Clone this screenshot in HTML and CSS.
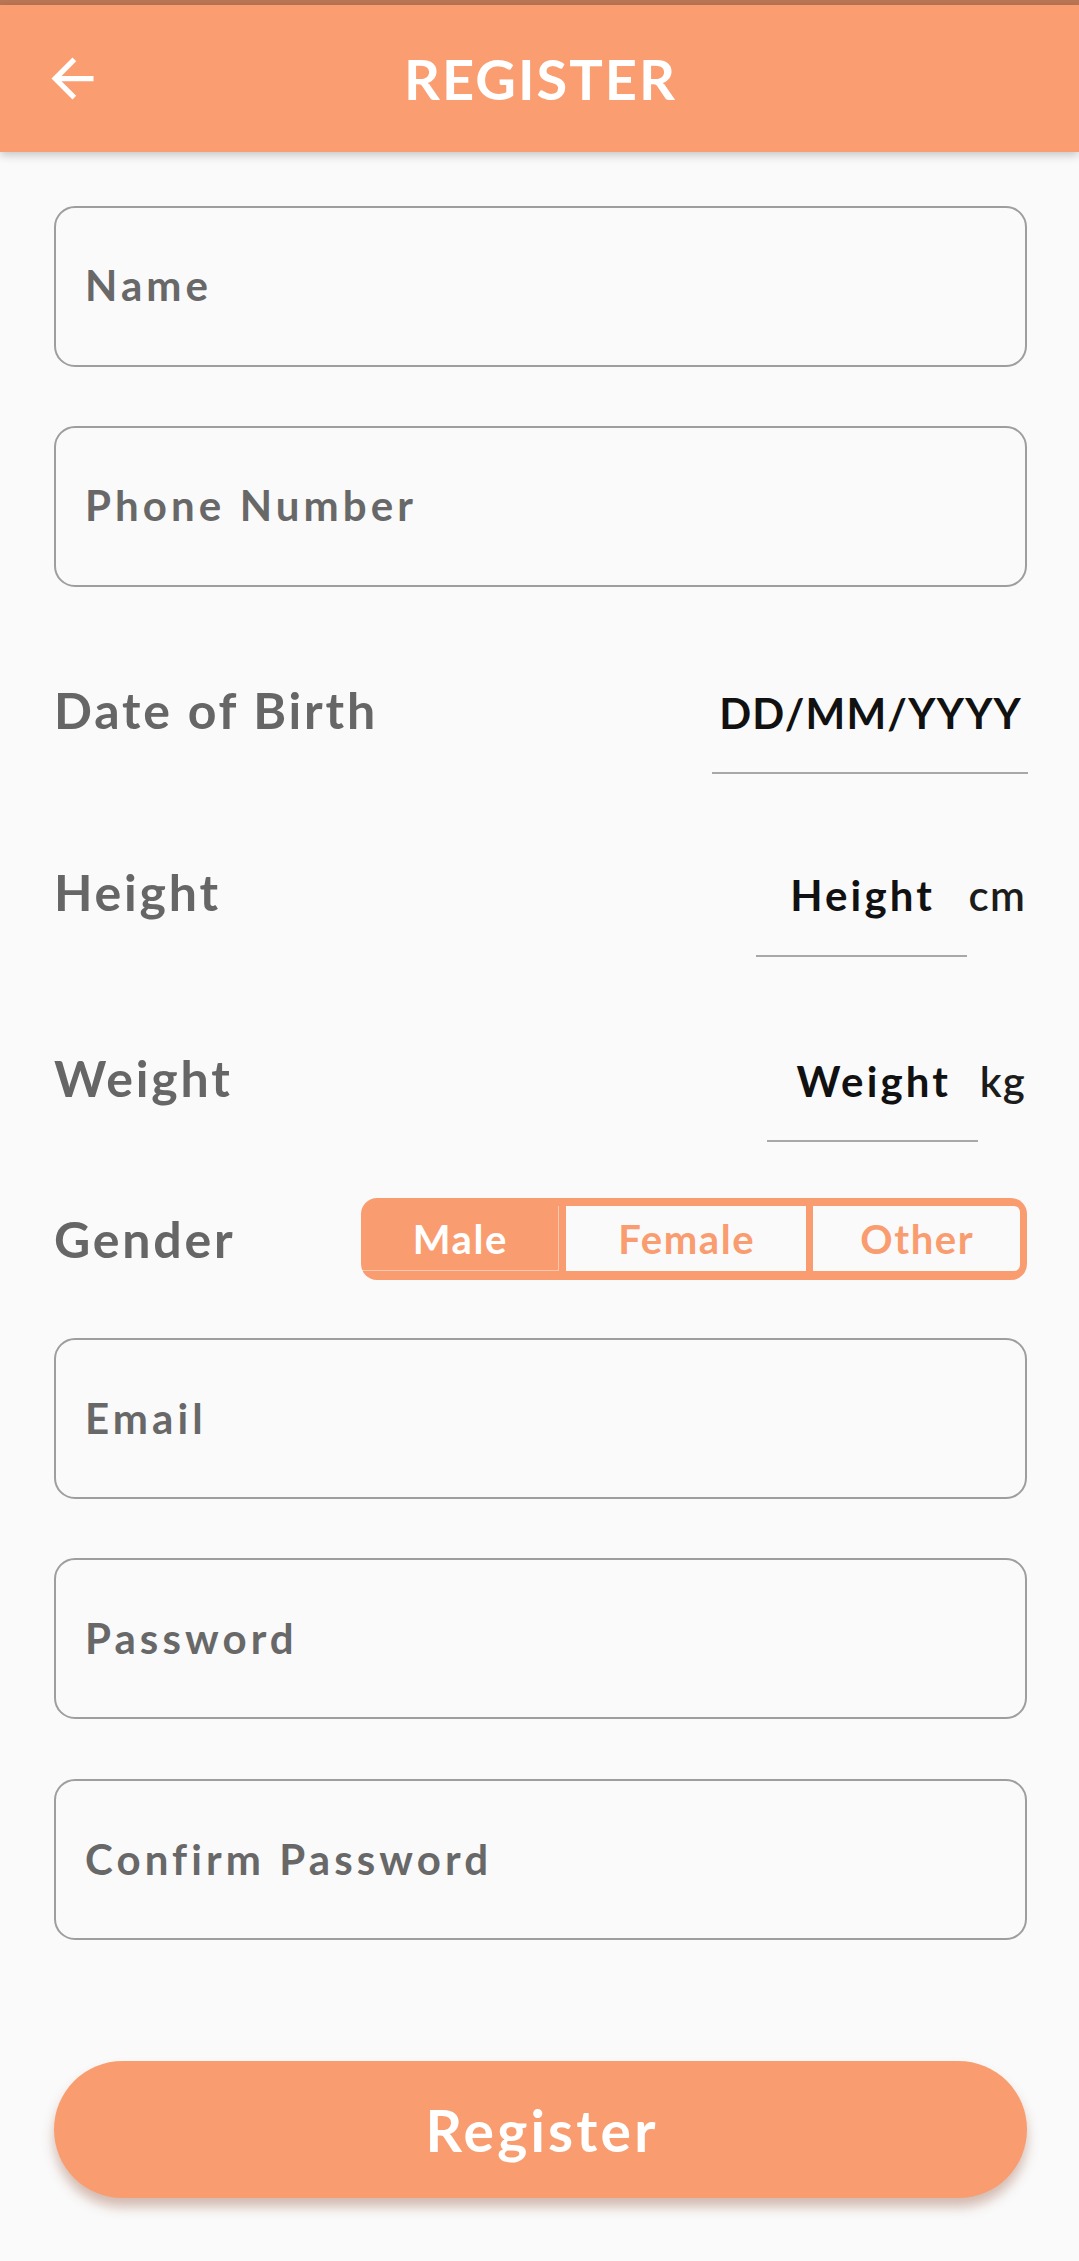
FILE: index.html
```html
<!DOCTYPE html>
<html lang="en">
<head>
<meta charset="utf-8">
<title>Register</title>
<link rel="stylesheet" href="styles.css">
</head>
<body>
<div class="status"></div>
<header class="appbar">
  <button class="back" aria-label="Back">
    <svg viewBox="0 0 24 24" width="63" height="63"><path d="M20 11H7.83l5.59-5.59L12 4l-8 8 8 8 1.41-1.41L7.83 13H20v-2z" fill="#fff"/></svg>
  </button>
  <h1 class="title">REGISTER</h1>
  <span class="spacer"></span>
</header>
<main class="form">
  <div class="field f-name"><span class="hint">Name</span></div>
  <div class="field f-phone"><span class="hint">Phone Number</span></div>

  <div class="row r-dob">
    <span class="label">Date of Birth</span>
    <div class="measure m-dob"><span class="line-input w-dob">DD/MM/YYYY</span></div>
  </div>
  <div class="row r-height">
    <span class="label">Height</span>
    <div class="measure"><span class="line-input w-num">Height</span><span class="unit u-cm">cm</span></div>
  </div>
  <div class="row r-weight">
    <span class="label">Weight</span>
    <div class="measure"><span class="line-input w-num">Weight</span><span class="unit u-kg">kg</span></div>
  </div>
  <div class="row r-gender">
    <span class="label">Gender</span>
    <div class="toggle">
      <span class="seg seg-on">Male</span>
      <span class="seg seg-female">Female</span>
      <span class="seg seg-other">Other</span>
    </div>
  </div>

  <div class="field f-email"><span class="hint">Email</span></div>
  <div class="field f-pass"><span class="hint">Password</span></div>
  <div class="field f-confirm"><span class="hint">Confirm Password</span></div>

  <button class="btn">Register</button>
</main>
</body>
</html>
```
FILE: styles.css
```css
html, body {
  margin: 0;
  padding: 0;
  background: #fafafa;
}
body {
  width: 1079px;
  min-height: 2261px;
  font-family: Lato, "Noto Sans", sans-serif;
  overflow: hidden;
}
.status {
  height: 5px;
  background: #bb7755;
}
.appbar {
  position: relative;
  z-index: 2;
  height: 147px;
  background: #fa9d71;
  box-shadow: 0 3px 9px rgba(0, 0, 0, 0.22);
  display: grid;
  grid-template-columns: 1fr auto 1fr;
  align-items: center;
}
.back {
  justify-self: start;
  margin-left: 41px;
  width: 63px;
  height: 63px;
  padding: 0;
  border: 0;
  background: none;
  display: flex;
}
.title {
  margin: 0;
  padding-left: 2px;
  font-weight: 700;
  font-size: 56px;
  line-height: 1.2;
  color: #fff;
  letter-spacing: 2px;
}
.form {
  display: flex;
  flex-direction: column;
  padding: 54px 52px 0 54px;
}
.field {
  height: 161px;
  box-sizing: border-box;
  border: 2px solid #9e9e9e;
  border-radius: 21px;
  display: flex;
  align-items: center;
  padding-left: 29px;
  padding-bottom: 2px;
}
.hint {
  font-weight: 700;
  font-size: 42px;
  line-height: 1.2;
  color: #686868;
  letter-spacing: 4.1px;
}
.f-phone { margin-top: 59px; }
.f-email { margin-top: 58px; }
.f-pass { margin-top: 59px; }
.f-confirm { margin-top: 60px; }

.row {
  display: flex;
  justify-content: space-between;
  align-items: baseline;
}
.r-dob { margin-top: 93px; }
.r-height { margin-top: 88px; }
.r-weight { margin-top: 91px; }
.r-gender {
  margin-top: 56px;
  align-items: center;
}
.label {
  font-weight: 700;
  font-size: 50px;
  line-height: 60px;
  color: #666;
  letter-spacing: 2.8px;
}
.measure {
  display: flex;
  align-items: baseline;
}
.line-input {
  display: block;
  text-align: center;
  font-weight: 700;
  font-size: 42px;
  line-height: 50.4px;
  color: #111;
  padding-bottom: 34px;
  border-bottom: 2px solid #a8a8a8;
}
.w-dob { width: 316px; letter-spacing: 1.2px; text-indent: 1.2px; }
.w-num { width: 211px; letter-spacing: 3.1px; text-indent: 3.1px; }
.m-dob { margin-right: -1px; }
.unit {
  font-weight: 600;
  font-size: 42px;
  color: #1c1c1c;
  letter-spacing: 1.2px;
  padding-left: 2px;
  margin-right: 1px;
}
.toggle {
  display: flex;
  width: 666px;
  height: 82px;
  box-sizing: border-box;
  padding: 8px 7px 9px 0;
  gap: 7px;
  background: #f99d70;
  border-radius: 16px;
}
.seg {
  display: flex;
  align-items: center;
  justify-content: center;
  font-weight: 700;
  font-size: 40px;
  color: #f99d70;
  background: #fafafa;
  letter-spacing: 1.6px;
  text-indent: 1.6px;
}
.seg-on {
  width: 198px;
  box-sizing: border-box;
  color: #fff;
  background: transparent;
  border-right: 1px solid rgba(255, 255, 255, 0.45);
  border-bottom: 1px solid rgba(255, 255, 255, 0.45);
  padding-top: 1px;
}
.seg-female { width: 240px; }
.seg-other {
  width: 207px;
  border-radius: 0 6px 6px 0;
}
.btn {
  margin-top: 121px;
  height: 137px;
  border: 0;
  border-radius: 69px;
  background: #f99d70;
  box-shadow: 0 9px 12px rgba(140, 70, 40, 0.35);
  color: #fff;
  font-family: Lato, "Noto Sans", sans-serif;
  font-weight: 700;
  font-size: 57px;
  letter-spacing: 3.2px;
  text-indent: 3.2px;
  padding: 0;
}
```
